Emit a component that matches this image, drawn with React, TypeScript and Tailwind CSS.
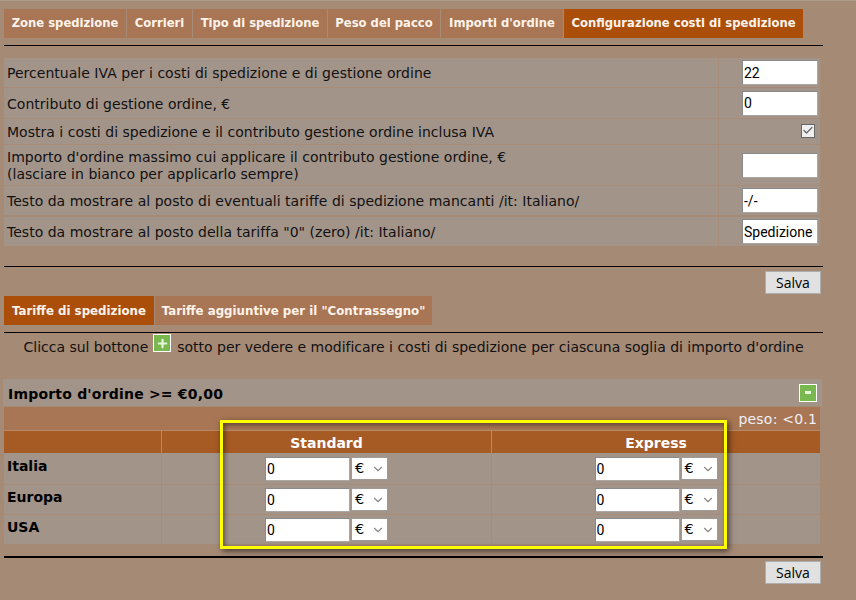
import React from 'react';
import { Check, ChevronDown, Plus } from 'lucide-react';

const topTabs = [
  { label: 'Zone spedizione', width: 'w-[122px]' },
  { label: 'Corrieri', width: 'w-[65px]' },
  { label: 'Tipo di spedizione', width: 'w-[134px]' },
  { label: 'Peso del pacco', width: 'w-[112px]' },
  { label: "Importi d'ordine", width: 'w-[122px]' },
  { label: 'Configurazione costi di spedizione', width: 'w-[239px]', active: true },
];

const settings = [
  { label: <>Percentuale IVA per i costi di spedizione e di gestione ordine</>, height: 'h-[29px]', value: '22' },
  { label: <>Contributo di gestione ordine, €</>, height: 'h-[31px]', value: '0' },
  { label: <>Mostra i costi di spedizione e il contributo gestione ordine inclusa IVA</>, height: 'h-[26px]', check: true },
  {
    label: (
      <>
        Importo d'ordine massimo cui applicare il contributo gestione ordine, €
        <br />
        (lasciare in bianco per applicarlo sempre)
      </>
    ),
    height: 'h-[41px]',
    value: '',
  },
  { label: <>Testo da mostrare al posto di eventuali tariffe di spedizione mancanti /it: Italiano/</>, height: 'h-[30px]', value: '-/-' },
  { label: <>Testo da mostrare al posto della tariffa "0" (zero) /it: Italiano/</>, height: 'h-[29px]', value: 'Spedizione', gap: true },
];

function TextBox({ value, width, height }: { value: string; width: string; height: string }) {
  return (
    <input
      readOnly
      value={value}
      className={`${width} ${height} shrink-0 bg-white border border-t-[#8a8a8a] border-l-[#8a8a8a] border-r-[#aaa6a3] border-b-[#aaa6a3] pl-[1px] text-[14px] text-black outline-none [font-family:'Roboto','Noto_Sans',sans-serif]`}
    />
  );
}

function SaveButton() {
  return (
    <button className="w-[56px] h-[23px] bg-[#e1e1e1] border border-[#adadad] text-[14px] text-black [font-family:'Open_Sans',sans-serif]">
      Salva
    </button>
  );
}

function PriceCell() {
  return (
    <div className="flex items-center justify-center gap-[1px]">
      <TextBox value="0" width="w-[85px]" height="h-[24px]" />
      <div className="w-[37px] h-[23px] bg-white border border-[#a09a96] flex items-center justify-between pl-[3px] pr-[2px] text-[14.5px] text-black">
        <span className="pt-[1px]">€</span>
        <ChevronDown size={14} className="text-[#8a8a8a]" />
      </div>
    </div>
  );
}

export default function App() {
  return (
    <div className="relative w-[856px] h-[600px] overflow-hidden bg-[#a58a76] text-[14px] text-[#111] [font-family:'DejaVu_Sans',sans-serif]">
      <div className="h-[1px] bg-[#b09a88]" />
      <div className="w-[819px] ml-[4px]">
        {/* Top tabs */}
        <div className="flex gap-[1px] mt-[8px]">
          {topTabs.map((tab) => (
            <div
              key={tab.label}
              className={`${tab.width} h-[29px] pt-[1px] flex items-center justify-center text-[11.6px] font-bold text-[#fdf3ea] ${tab.active ? 'bg-[#ab4e0a]' : 'bg-[#a87654]'}`}
            >
              {tab.label}
            </div>
          ))}
        </div>
        <div className="h-[1px] bg-black mt-[7px]" />

        {/* Settings table */}
        <div className="w-[816px] mt-[12px]">
          {settings.map((row, i) => (
            <div
              key={i}
              className={`${row.height} flex bg-[#a3948a] ${row.gap ? 'mt-[2px]' : i > 0 ? 'border-t border-[#a98c78]' : ''}`}
            >
              <div className="w-[715px] pl-[3px] pt-[2px] flex items-center leading-[17px] tracking-[0.02px] border-r border-[#a98c78]">
                <div>{row.label}</div>
              </div>
              <div className="flex-1 flex items-center justify-end pr-[2px]">
                {row.check ? (
                  <div className="w-[14px] h-[14px] mr-[3px] mb-[2px] bg-[#efefef] border border-[#666] flex items-center justify-center">
                    <Check size={13} strokeWidth={2.5} className="text-[#666]" />
                  </div>
                ) : (
                  <TextBox value={row.value ?? ''} width="w-[76px]" height="h-[25px]" />
                )}
              </div>
            </div>
          ))}
        </div>

        <div className="h-[1px] bg-black mt-[20px]" />
        <div className="flex justify-end pr-[2px] mt-[4px]">
          <SaveButton />
        </div>

        {/* Second tabs */}
        <div className="flex gap-[1px] mt-[2px]">
          <div className="w-[150px] h-[29px] pt-[2px] flex items-center justify-center text-[11.8px] font-bold text-[#fdf3ea] bg-[#ab4e0a]">
            Tariffe di spedizione
          </div>
          <div className="w-[277px] h-[29px] pt-[2px] flex items-center justify-center text-[11.8px] font-bold text-[#fdf3ea] bg-[#a87654]">
            Tariffe aggiuntive per il "Contrassegno"
          </div>
        </div>
        <div className="h-[1px] bg-black mt-[7px]" />
        <div className="flex items-start justify-center h-[46px] pt-[4px] tracking-[-0.01px]">
          Clicca sul bottone
          <span className="w-[18px] h-[18px] -mt-[3px] ml-[5px] mr-[6px] bg-[#78b84f] border border-white flex items-center justify-center">
            <Plus size={13} strokeWidth={4} className="text-[#e8f5dc]" />
          </span>
          sotto per vedere e modificare i costi di spedizione per ciascuna soglia di importo d'ordine
        </div>

        {/* Threshold header */}
        <div className="-ml-[1px] w-[819px] h-[27px] bg-[#a3948a] flex items-center justify-between pl-[5px] pr-[5px]">
          <span className="pt-[3px] font-bold text-[14px] tracking-[0.2px] text-black">Importo d'ordine &gt;= €0,00</span>
          <span className="w-[18px] h-[18px] bg-[#78b84f] border border-white flex items-center justify-center">
            <span className="w-[6px] h-[3px] bg-[#e8f5dc]" />
          </span>
        </div>

        {/* Rates table */}
        <div className="w-[816px] mt-[1px]">
          <div className="h-[23px] bg-[#a87654] text-right pr-[3px] text-[14px] tracking-[0.2px] leading-[25px] text-[#eef0fa]">peso: &lt;0.1</div>
          <div className="grid grid-cols-[158px_330px_328px] h-[23px] bg-[#a65a24] border-t border-[#b98a68] text-white font-bold text-[14px] leading-[24px] text-center">
            <div className="border-r border-[#b98a68]" />
            <div className="border-r border-[#b98a68]">Standard</div>
            <div>Express</div>
          </div>
          {['Italia', 'Europa', 'USA'].map((country, i) => (
            <div
              key={country}
              className={`grid grid-cols-[158px_330px_328px] ${i === 0 ? 'h-[31px]' : 'h-[30px] border-t border-[#a98c78]'} bg-[#a3948a] items-center`}
            >
              <div className={`h-full pl-[3px] ${i === 0 ? 'pt-[3px]' : 'pt-[2px]'} font-bold text-[14px] text-black border-r border-[#a98c78]`}>{country}</div>
              <div className="h-full flex items-center justify-center border-r border-[#a98c78]">
                <PriceCell />
              </div>
              <div className="h-full flex items-center justify-center">
                <PriceCell />
              </div>
            </div>
          ))}
        </div>

        <div className="h-[2px] bg-black mt-[12px]" />
        <div className="flex justify-end pr-[2px] mt-[3px]">
          <SaveButton />
        </div>
      </div>

      {/* Yellow highlight over the price columns */}
      <div className="absolute left-[220px] top-[420px] w-[507px] h-[129px] border-[3px] border-[#ffff00] shadow-[2px_2px_6px_rgba(0,0,0,0.6),inset_2px_2px_5px_rgba(0,0,0,0.45)]" />
    </div>
  );
}
